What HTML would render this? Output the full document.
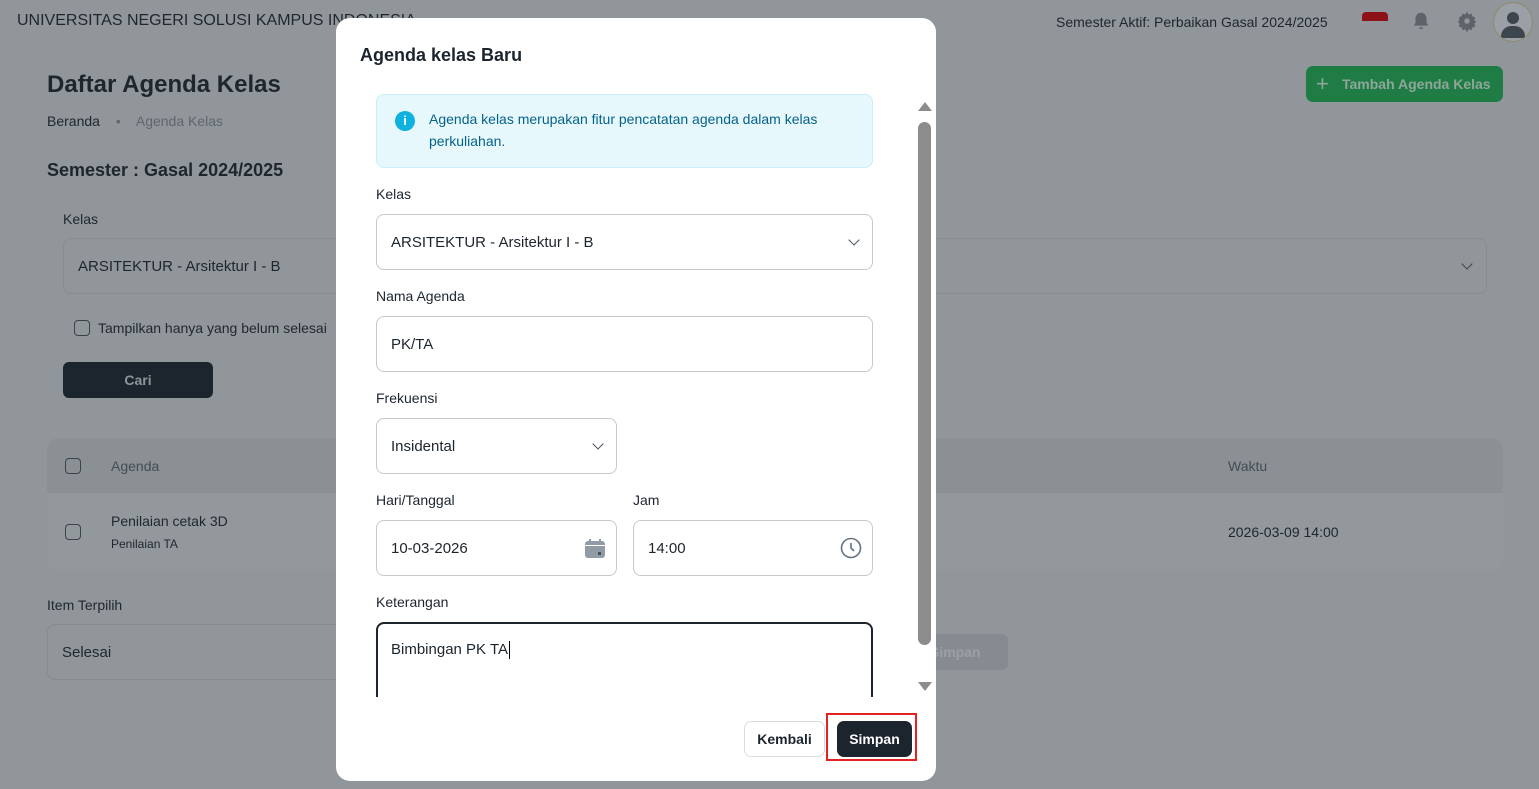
<!DOCTYPE html>
<html><head><meta charset="utf-8"><style>
*{box-sizing:border-box;margin:0;padding:0}
body{width:1539px;height:789px;overflow:hidden;background:#91969a;font-family:"Liberation Sans",sans-serif;color:#1c252e;position:relative}
.a{position:absolute}
.dim{color:#1f262c}
.inp{position:absolute;border:1px solid #c5c9cc;border-radius:8px;background:#fff;font-size:15px;color:#1c252e;padding-left:14px;display:flex;align-items:center}
.bgin{position:absolute;border:1px solid #868b90;border-radius:8px;font-size:15px;color:#1f262c;padding-left:14px;display:flex;align-items:center}
.lbl{position:absolute;font-size:14px;color:#1c252e}
.chev{position:absolute;width:8px;height:8px;border-right:1.6px solid #454f5b;border-bottom:1.6px solid #454f5b;transform:rotate(45deg)}
.cb{position:absolute;width:16px;height:16px;border:1.6px solid #3b4248;border-radius:4px}
</style></head><body>
<div class="a dim" style="left:17px;top:12px;font-size:16px">UNIVERSITAS NEGERI SOLUSI KAMPUS INDONESIA</div>
<div class="a dim" style="left:1056px;top:14px;font-size:14px">Semester Aktif: Perbaikan Gasal 2024/2025</div>
<div class="a" style="left:1362px;top:12px;width:26px;height:9px;background:#8c1218;border-radius:4px 4px 0 0"></div>
<svg class="a" style="left:1410px;top:10px" width="22" height="22" viewBox="0 0 24 24"><path d="M12 3a6 6 0 0 0-6 6v5l-2 3h16l-2-3V9a6 6 0 0 0-6-6zM10 19a2 2 0 0 0 4 0z" fill="#5d6369"/></svg>
<svg class="a" style="left:1456px;top:10px" width="22" height="22" viewBox="0 0 24 24"><path d="M12 2l2 3 3-1 1 3 3 1-1 3 2 2-2 2 1 3-3 1-1 3-3-1-2 3-2-3-3 1-1-3-3-1 1-3-2-2 2-2-1-3 3-1 1-3 3 1z" fill="#5d6369"/><circle cx="12" cy="12" r="3" fill="#91969a"/></svg>
<div class="a" style="left:1493px;top:2px;width:40px;height:40px;border-radius:50%;border:1.5px solid #8e8a6a;background:#9aa0a5;overflow:hidden"><div class="a" style="left:13px;top:9px;width:12px;height:12px;border-radius:50%;background:#3e464d"></div><div class="a" style="left:7px;top:23px;width:24px;height:12px;border-radius:12px 12px 2px 2px;background:#3e464d"></div></div>
<div class="a" style="left:1306px;top:66px;width:197px;height:36px;background:#1f7c45;border-radius:7px;color:#8fa69a;font-weight:bold;font-size:14px;padding-left:36px;line-height:36px">Tambah Agenda Kelas</div>
<div class="a" style="left:1316px;top:71px;color:#8fa69a;font-size:22px;line-height:26px">+</div>
<div class="a dim" style="left:47px;top:71px;font-size:24px;font-weight:bold">Daftar Agenda Kelas</div>
<div class="a dim" style="left:47px;top:113px;font-size:14px">Beranda <span style="color:#5f666c;margin:0 12px">•</span> <span style="color:#5f666c">Agenda Kelas</span></div>
<div class="a dim" style="left:47px;top:160px;font-size:18px;font-weight:bold">Semester : Gasal 2024/2025</div>
<div class="a dim" style="left:63px;top:211px;font-size:14px">Kelas</div>
<div class="bgin" style="left:63px;top:238px;width:1424px;height:56px">ARSITEKTUR - Arsitektur I - B</div>
<div class="chev" style="left:1463px;top:260px;border-color:#3b4248"></div>
<div class="cb" style="left:74px;top:320px"></div>
<div class="a dim" style="left:98px;top:320px;font-size:14px">Tampilkan hanya yang belum selesai</div>
<div class="a" style="left:63px;top:362px;width:150px;height:36px;background:#1c252e;border-radius:6px;color:#8e949a;font-weight:bold;font-size:14px;text-align:center;line-height:36px">Cari</div>
<div class="a" style="left:47px;top:438px;width:1456px;height:132px;border-radius:12px;background:#93989c;overflow:hidden"><div style="height:55px;background:#8b9095"></div></div>
<div class="cb" style="left:65px;top:458px"></div>
<div class="a" style="left:111px;top:458px;font-size:14px;color:#454c52">Agenda</div>
<div class="a" style="left:1228px;top:458px;font-size:14px;color:#454c52">Waktu</div>
<div class="cb" style="left:65px;top:524px"></div>
<div class="a dim" style="left:111px;top:513px;font-size:14px">Penilaian cetak 3D</div>
<div class="a dim" style="left:111px;top:537px;font-size:12px">Penilaian TA</div>
<div class="a dim" style="left:1228px;top:524px;font-size:14px">2026-03-09 14:00</div>
<div class="a dim" style="left:47px;top:597px;font-size:14px">Item Terpilih</div>
<div class="bgin" style="left:47px;top:624px;width:400px;height:56px">Selesai</div>
<div class="a" style="left:900px;top:634px;width:108px;height:36px;background:#858b90;border-radius:6px;color:#9aa0a5;font-weight:bold;font-size:14px;line-height:36px;padding-left:30px">Simpan</div>

<div class="a" style="left:336px;top:18px;width:600px;height:763px;background:#fff;border-radius:14px;overflow:hidden">
 <div class="a" style="left:24px;top:27px;font-size:18px;font-weight:bold;color:#1c252e">Agenda kelas Baru</div>
 <div class="a" style="left:0;top:70px;width:580px;height:609px;overflow:hidden">
  <div class="a" style="left:40px;top:6px;width:497px;height:74px;background:#e6f8fc;border:1px solid #c9eef7;border-radius:8px"></div>
  <div class="a" style="left:59px;top:23px;width:20px;height:20px;border-radius:50%;background:#0fb1de;color:#fff;font-size:13px;font-weight:bold;text-align:center;line-height:20px">i</div>
  <div class="a" style="left:93px;top:20px;width:430px;font-size:14px;line-height:22px;color:#05628a">Agenda kelas merupakan fitur pencatatan agenda dalam kelas perkuliahan.</div>
  <div class="lbl" style="left:40px;top:98px">Kelas</div>
  <div class="inp" style="left:40px;top:126px;width:497px;height:56px">ARSITEKTUR - Arsitektur I - B</div>
  <div class="chev" style="left:514px;top:148px"></div>
  <div class="lbl" style="left:40px;top:200px">Nama Agenda</div>
  <div class="inp" style="left:40px;top:228px;width:497px;height:56px">PK/TA</div>
  <div class="lbl" style="left:40px;top:302px">Frekuensi</div>
  <div class="inp" style="left:40px;top:330px;width:241px;height:56px">Insidental</div>
  <div class="chev" style="left:258px;top:352px"></div>
  <div class="lbl" style="left:40px;top:404px">Hari/Tanggal</div>
  <div class="lbl" style="left:297px;top:404px">Jam</div>
  <div class="inp" style="left:40px;top:432px;width:241px;height:56px">10-03-2026</div>
  <svg class="a" style="left:247px;top:449px" width="24" height="24" viewBox="0 0 24 24"><rect x="2" y="4" width="20" height="17" rx="3" fill="#919ba5"/><rect x="6" y="2" width="2" height="4" fill="#919ba5"/><rect x="16" y="2" width="2" height="4" fill="#919ba5"/><rect x="2" y="8" width="20" height="1" fill="#fff"/><rect x="15" y="15" width="3" height="3" fill="#454f5b"/></svg>
  <div class="inp" style="left:297px;top:432px;width:240px;height:56px">14:00</div>
  <svg class="a" style="left:503px;top:448px" width="24" height="24" viewBox="0 0 24 24"><circle cx="12" cy="12" r="9.5" fill="none" stroke="#637381" stroke-width="1.6"/><path d="M12 7v5l3 3" fill="none" stroke="#637381" stroke-width="1.6"/></svg>
  <div class="lbl" style="left:40px;top:506px">Keterangan</div>
  <div class="inp" style="left:40px;top:534px;width:497px;height:100px;border:2px solid #1c252e;align-items:flex-start;padding-top:17px;padding-left:13px">Bimbingan PK TA<span style="border-left:1px solid #000;height:18px;margin-left:1px"></span></div>
 </div>
 <div class="a" style="left:580px;top:80px;width:18px;height:598px;background:#fff"></div>
 <div class="a" style="left:582px;top:84px;width:0;height:0;border-left:7px solid transparent;border-right:7px solid transparent;border-bottom:9px solid #8c8c8c"></div>
 <div class="a" style="left:582px;top:104px;width:13px;height:523px;background:#8c8c8c;border-radius:7px"></div>
 <div class="a" style="left:582px;top:664px;width:0;height:0;border-left:7px solid transparent;border-right:7px solid transparent;border-top:9px solid #8c8c8c"></div>
 <div class="a" style="left:408px;top:703px;width:81px;height:36px;border:1px solid #d8dcdf;border-radius:7px;font-size:14px;font-weight:bold;text-align:center;line-height:34px;color:#1c252e">Kembali</div>
 <div class="a" style="left:490px;top:695px;width:91px;height:48px;border:2.5px solid #e32222"></div>
 <div class="a" style="left:501px;top:703px;width:75px;height:36px;background:#1c252e;border-radius:7px;font-size:14px;font-weight:bold;text-align:center;line-height:36px;color:#fff">Simpan</div>
</div>
</body></html>
